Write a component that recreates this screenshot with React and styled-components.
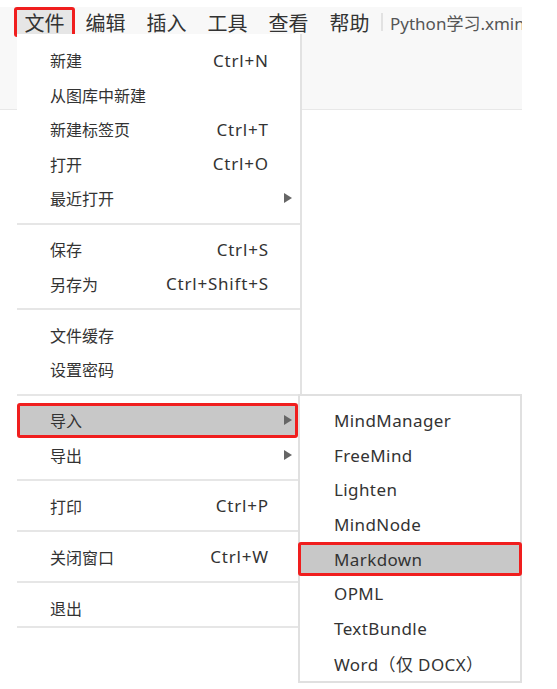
import React from "react";
import styled, { createGlobalStyle } from "styled-components";

const GlobalStyle = createGlobalStyle`
  body {
    margin: 0;
    background: #fff;
    font-family: "Noto Sans", "Noto Sans CJK SC", sans-serif;
    color: #333;
  }
`;

const topMenus = ["文件", "编辑", "插入", "工具", "查看", "帮助"];

const fileMenu = [
  [
    { label: "新建", key: "Ctrl+N" },
    { label: "从图库中新建" },
    { label: "新建标签页", key: "Ctrl+T" },
    { label: "打开", key: "Ctrl+O" },
    { label: "最近打开", sub: true },
  ],
  [
    { label: "保存", key: "Ctrl+S" },
    { label: "另存为", key: "Ctrl+Shift+S" },
  ],
  [{ label: "文件缓存" }, { label: "设置密码" }],
  [
    { label: "导入", sub: true, active: true },
    { label: "导出", sub: true },
  ],
  [{ label: "打印", key: "Ctrl+P" }],
  [{ label: "关闭窗口", key: "Ctrl+W" }],
  [{ label: "退出" }],
];

const importMenu = [
  "MindManager",
  "FreeMind",
  "Lighten",
  "MindNode",
  "Markdown",
  "OPML",
  "TextBundle",
  "Word（仅 DOCX）",
];

function Arrow() {
  return (
    <svg width="8" height="10" viewBox="0 0 8 10">
      <polygon points="0,0 8,5 0,10" fill="#666" />
    </svg>
  );
}

export default function App() {
  return (
    <Page>
      <GlobalStyle />
      <Window>
        <Header>
          <MenuBar>
            {topMenus.map((m, i) => (
              <MenuItem key={m} $active={i === 0}>
                {m}
              </MenuItem>
            ))}
            <Divider />
            <Title>Python学习.xmind</Title>
          </MenuBar>
        </Header>

        <Dropdown>
          {fileMenu.map((group, gi) => (
            <React.Fragment key={gi}>
              {group.map((item) => (
                <Row key={item.label} $active={item.active}>
                  <Label>{item.label}</Label>
                  {item.key && <Shortcut>{item.key}</Shortcut>}
                  <ArrowCell>{item.sub && <Arrow />}</ArrowCell>
                </Row>
              ))}
              <Separator $last={gi === fileMenu.length - 1} />
            </React.Fragment>
          ))}
        </Dropdown>

        <SubMenu>
          {importMenu.map((name) => (
            <SubRow key={name} $active={name === "Markdown"}>
              {name}
            </SubRow>
          ))}
        </SubMenu>
      </Window>
    </Page>
  );
}

const Page = styled.div`
  padding-top: 10px;
  height: 679px;
`;

const Window = styled.div`
  position: relative;
  width: 522px;
`;

const Header = styled.header`
  height: 102px;
  background: #f8f8f8;
  border-bottom: 1px solid #e8e8e8;
`;

const MenuBar = styled.nav`
  display: flex;
  align-items: center;
  height: 30px;
  margin-top: -3px;
  padding-left: 14px;
  overflow: hidden;
  white-space: nowrap;
`;

const MenuItem = styled.div`
  box-sizing: border-box;
  flex: none;
  width: 61px;
  height: 30px;
  display: flex;
  align-items: center;
  justify-content: center;
  font-size: 20px;
  color: #333;
  border: 3px solid ${(p) => (p.$active ? "#f01e1e" : "transparent")};
  border-radius: 3px;
  background: ${(p) => (p.$active ? "#e6e6e6" : "transparent")};
`;

const Divider = styled.div`
  flex: none;
  width: 2px;
  height: 18px;
  background: #e2e2e2;
  margin: 0 7px 0 1px;
`;

const Title = styled.span`
  font-size: 17px;
  color: #555;
`;

const Dropdown = styled.div`
  position: absolute;
  left: 17px;
  top: 27px;
  width: 285px;
  box-sizing: border-box;
  background: #fff;
  border-right: 2px solid #e2e2e2;
  padding-top: 9px;
`;

const Row = styled.div`
  box-sizing: border-box;
  display: flex;
  align-items: center;
  height: 34.5px;
  margin-right: 2px;
  padding-left: 30px;
  border: 3px solid ${(p) => (p.$active ? "#f01e1e" : "transparent")};
  border-radius: 3px;
  background: ${(p) => (p.$active ? "#c8c8c8" : "transparent")};
`;

const Label = styled.span`
  flex: 1;
  font-size: 16px;
  color: #333;
`;

const Shortcut = styled.span`
  font-size: 17px;
  letter-spacing: 0.8px;
  margin-right: -0.8px;
  color: #333;
`;

const ArrowCell = styled.span`
  flex: none;
  width: 27px;
  box-sizing: border-box;
  padding-left: 16px;
  display: flex;
  align-items: center;
`;

const Separator = styled.div`
  height: 2px;
  background: #e6e6e6;
  margin: ${(p) => (p.$last ? "0.5px 0 0" : "7px 0 7.5px")};
`;

const SubMenu = styled.div`
  position: absolute;
  left: 298px;
  top: 387px;
  width: 224px;
  box-sizing: border-box;
  background: #fff;
  border: 2px solid #e0e0e0;
  padding: 7px 0 0.5px;
`;

const SubRow = styled.div`
  box-sizing: border-box;
  height: 34.7px;
  display: flex;
  align-items: center;
  margin: ${(p) => (p.$active ? "0 -2px" : "0")};
  padding-left: ${(p) => (p.$active ? "33px" : "31px")};
  border: 3px solid ${(p) => (p.$active ? "#f01e1e" : "transparent")};
  border-radius: 3px;
  background: ${(p) => (p.$active ? "#c8c8c8" : "transparent")};
  font-size: 17px;
  letter-spacing: 0.4px;
  color: #333;
  white-space: nowrap;
`;
